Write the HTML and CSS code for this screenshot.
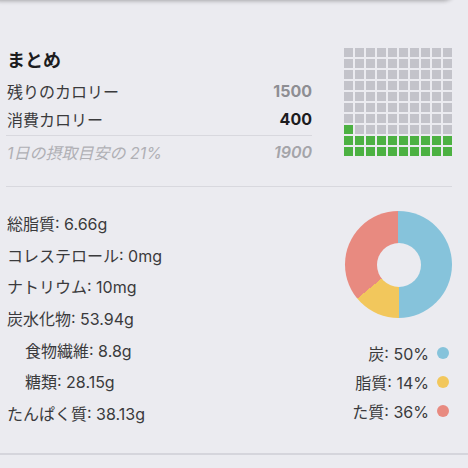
FILE: index.html
```html
<!DOCTYPE html>
<html lang="ja">
<head>
  <meta charset="UTF-8" />
  <meta name="viewport" content="width=device-width, initial-scale=1.0" />
  <title>まとめ</title>
  <link rel="stylesheet" href="styles.css">
</head>
<body onload="buildWaffle(21)">
  <div class="top-card"></div>

  <!-- まとめ -->
  <div class="summary">
    <div class="summary-left">
      <h2 class="title">まとめ</h2>
      <div class="row">
        <span>残りのカロリー</span>
        <span class="num muted">1500</span>
      </div>
      <div class="row row-line">
        <span>消費カロリー</span>
        <span class="num">400</span>
      </div>
      <div class="row row-note">
        <span>1日の摂取目安の 21%</span>
        <span class="num">1900</span>
      </div>
    </div>
    <div id="waffle" class="waffle"></div>
  </div>

  <!-- 栄養素 -->
  <div class="nutrients">
    <ul class="nutrient-list">
      <li>総脂質: 6.66g</li>
      <li>コレステロール: 0mg</li>
      <li>ナトリウム: 10mg</li>
      <li>炭水化物: 53.94g</li>
      <li class="sub">食物繊維: 8.8g</li>
      <li class="sub">糖類: 28.15g</li>
      <li>たんぱく質: 38.13g</li>
    </ul>
    <div class="chart">
      <div class="donut"></div>
      <ul class="legend">
        <li>炭: 50% <span class="dot carb"></span></li>
        <li>脂質: 14% <span class="dot fat"></span></li>
        <li>た質: 36% <span class="dot protein"></span></li>
      </ul>
    </div>
  </div>

  <div class="bottom-line"></div>

  <script>
    // 100マス、左下から埋めていく
    function buildWaffle(percent) {
      const waffle = document.getElementById('waffle');
      for (let row = 9; row >= 0; row--) {
        for (let col = 0; col < 10; col++) {
          const cell = document.createElement('span');
          cell.className = 'cell';
          if (row * 10 + col < percent) {
            cell.classList.add('filled');
          }
          waffle.appendChild(cell);
        }
      }
    }
  </script>
</body>
</html>
```

FILE: styles.css
```css
body {
  font-family: Inter, "Noto Sans CJK JP", sans-serif;
  margin: 0;
  padding: 0;
  background-color: #ebebf0;
  color: #3a3a3c;
  font-size: 16px;
}
ul {
  list-style-type: none;
  margin: 0;
  padding: 0;
}
.top-card {
  height: 20px;
  margin: -20px 14px 0 -10px;
  border-radius: 0 0 10px 10px;
  background-color: #ebebf0;
  box-shadow: 0 1px 4px rgba(0, 0, 0, 0.3);
}
.summary {
  display: flex;
  justify-content: space-between;
  margin: 0 16px 0 6px;
  padding-top: 48px;
  padding-bottom: 20px;
  border-bottom: 1px solid #d8d8de;
}
.summary-left {
  width: 306px;
}
.title {
  font-size: 18px;
  font-weight: bold;
  color: #1c1c1e;
  line-height: 24px;
  margin: 1px 0 4px 1px;
}
.row {
  display: flex;
  justify-content: space-between;
  align-items: center;
  height: 28px;
  padding-left: 1px;
}
.row-line {
  padding-bottom: 2px;
  border-bottom: 1px solid #d8d8de;
  margin-bottom: 2px;
}
.num {
  font-weight: bold;
  color: #1c1c1e;
}
.num.muted {
  color: #8e8e93;
}
.row-note {
  font-style: italic;
  color: #b0b0b5;
}
.row-note .num {
  font-weight: 600;
  color: #a4a4a9;
}
.waffle {
  display: grid;
  grid-template-columns: repeat(10, 9px);
  grid-auto-rows: 9px;
  gap: 2px;
  align-self: flex-start;
}
.cell {
  background-color: #c3c3ca;
}
.cell.filled {
  background-color: #4cb142;
}
.nutrients {
  display: flex;
  justify-content: space-between;
  margin: 0 16px 0 6px;
  padding-top: 22px;
}
.nutrient-list li {
  height: 31.7px;
  line-height: 31.7px;
  padding-left: 1px;
}
.nutrient-list li.sub {
  padding-left: 19px;
}
.chart {
  width: 107px;
  display: flex;
  flex-direction: column;
  align-items: flex-end;
  padding-top: 2px;
}
.donut {
  width: 107px;
  height: 107px;
  border-radius: 50%;
  background: conic-gradient(#86c3db 0 50%, #f2c75c 0 64%, #e88a80 0);
  display: flex;
  justify-content: center;
  align-items: center;
}
.donut::after {
  content: "";
  width: 44px;
  height: 44px;
  border-radius: 50%;
  background-color: #ebebf0;
}
.legend {
  margin-top: 20px;
  padding-right: 3px;
  white-space: nowrap;
}
.legend li {
  display: flex;
  justify-content: flex-end;
  align-items: center;
  height: 29px;
}
.dot {
  width: 12px;
  height: 12px;
  border-radius: 50%;
  margin-left: 8px;
}
.dot.carb {
  background-color: #86c3db;
}
.dot.fat {
  background-color: #f2c75c;
}
.dot.protein {
  background-color: #e88a80;
}
.bottom-line {
  margin-top: 22px;
  border-top: 2px solid #d5d5dc;
}
```
